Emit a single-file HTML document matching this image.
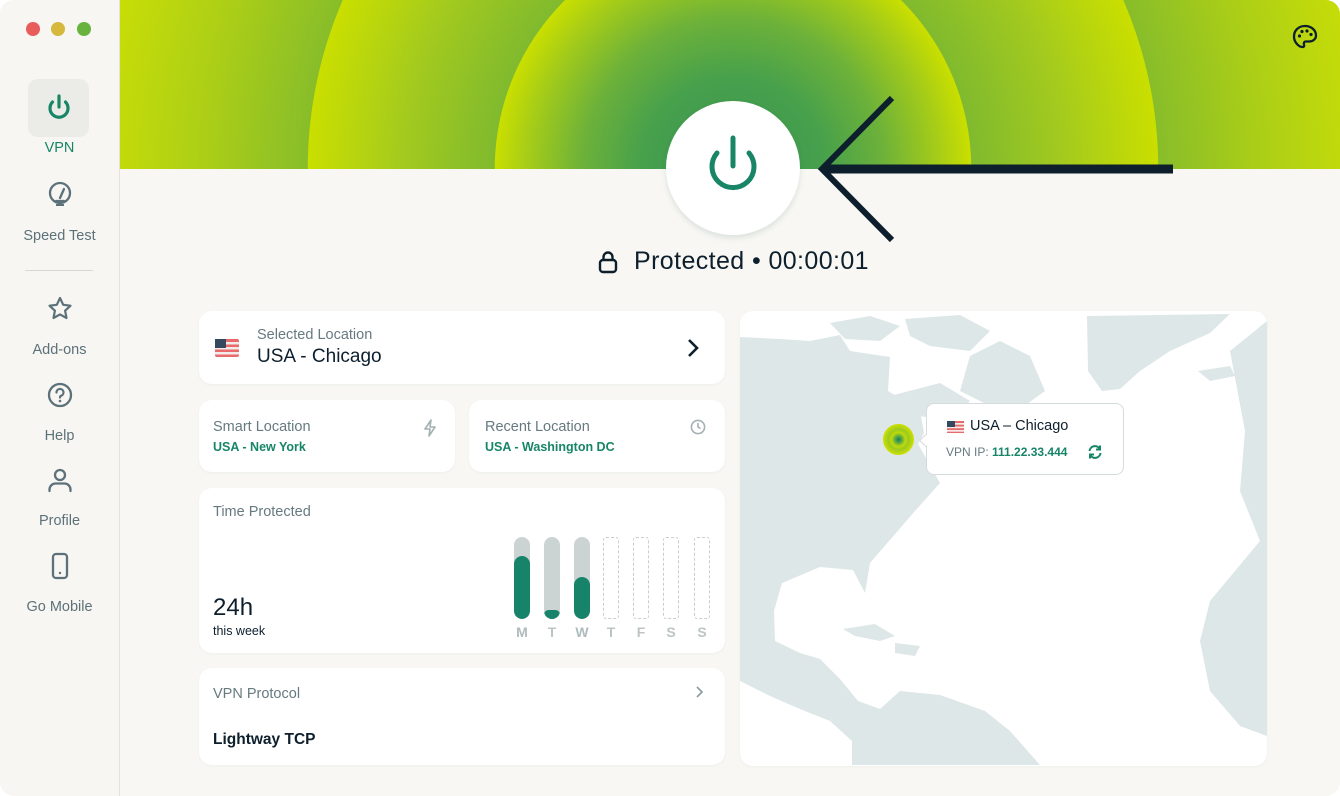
<!DOCTYPE html>
<html><head><meta charset="utf-8">
<style>
*{box-sizing:border-box;margin:0;padding:0}
body{width:1340px;height:796px;background:#fff;font-family:"Liberation Sans",sans-serif;overflow:hidden;position:relative}
.win{position:absolute;left:0;top:0;width:1340px;height:796px;border-radius:14px;overflow:hidden;background:#f8f7f3}
.side{position:absolute;left:0;top:0;width:120px;height:796px;background:#f7f6f2;border-right:1px solid #e4e3de}
.dot{position:absolute;top:22px;width:14px;height:14px;border-radius:50%}
.nav{position:absolute;left:0;width:119px;text-align:center;font-size:14.5px;color:#5c7179}
.nav svg{display:block;margin:0 auto 19px}
.hdr{position:absolute;left:120px;top:0;width:1220px;height:169px;
background:radial-gradient(circle at 613px 169px,#3a9550 0,#46a04c 90px,#6cb13a 150px,#a5cc18 205px,#cadf00 238px,#80ba2e 238.5px,#a3ca1e 330px,#cadf00 425px,#88bd2a 425.5px,#a9cd18 520px,#c9de06 640px)}
.card{position:absolute;background:#fff;border-radius:13px;box-shadow:0 1px 3px rgba(0,0,0,.04)}
.lbl{color:#667a80;font-size:14.5px}
.grn{color:#178566;font-weight:bold;font-size:12.5px}
.bar{position:absolute;top:537px;width:16px;height:82px;border-radius:8px;background:#cbd3d3;overflow:hidden}
.bar i{position:absolute;left:0;right:0;bottom:0;background:#17846a;border-radius:8px}
.dash{position:absolute;top:537px;width:16px;height:82px;border:1.5px dashed #c6cfcf;border-radius:3px}
.day{position:absolute;top:624px;width:20px;text-align:center;font-size:14px;font-weight:bold;color:#bcc5c5}
</style></head><body>
<div class="win">
<div class="side">
 <div class="dot" style="left:26px;background:#e85c5c"></div>
 <div class="dot" style="left:51px;background:#d6b83c"></div>
 <div class="dot" style="left:77px;background:#67b33e"></div>
 <div style="position:absolute;left:28px;top:79px;width:61px;height:58px;border-radius:10px;background:#ebece8"></div>
 <svg style="position:absolute;left:44px;top:93px" width="30" height="30" viewBox="0 0 30 30"><path d="M15 3v11" stroke="#178566" stroke-width="3.2" stroke-linecap="round"/><path d="M8.5 9a9 9 0 1 0 13 0" fill="none" stroke="#178566" stroke-width="3.2" stroke-linecap="round"/></svg>
 <div class="nav" style="top:140px;color:#178566">VPN</div>
 <div class="nav" style="top:179px"><svg width="26" height="30" viewBox="0 0 26 30"><circle cx="13" cy="14" r="10" fill="none" stroke="#5c7179" stroke-width="2.3"/><path d="M13 19l4-9M9 22h8" stroke="#5c7179" stroke-width="2.3" stroke-linecap="round"/><path d="M9 26h8" stroke="#5c7179" stroke-width="2"/></svg>Speed Test</div>
 <div style="position:absolute;left:25px;top:270px;width:68px;height:1px;background:#d6d9d6"></div>
 <div class="nav" style="top:295px"><svg width="28" height="28" viewBox="0 0 28 28"><path d="M14 3l3.2 6.8 7.3.9-5.4 5 1.4 7.3L14 19.4 7.5 23l1.4-7.3-5.4-5 7.3-.9z" fill="none" stroke="#5c7179" stroke-width="2.2" stroke-linejoin="round"/></svg>Add-ons</div>
 <div class="nav" style="top:381px"><svg width="28" height="28" viewBox="0 0 28 28"><circle cx="14" cy="14" r="11" fill="none" stroke="#5c7179" stroke-width="2.3"/><path d="M10.5 11.5a3.5 3.5 0 1 1 4.5 3.3c-.8.3-1 .9-1 1.7" fill="none" stroke="#5c7179" stroke-width="2.2" stroke-linecap="round"/><circle cx="14" cy="20" r="1.3" fill="#5c7179"/></svg>Help</div>
 <div class="nav" style="top:466px"><svg width="28" height="28" viewBox="0 0 28 28"><circle cx="14" cy="9" r="5" fill="none" stroke="#5c7179" stroke-width="2.3"/><path d="M3.5 25v-1.5a6 6 0 0 1 6-6h9a6 6 0 0 1 6 6V25" fill="none" stroke="#5c7179" stroke-width="2.3" stroke-linecap="round"/></svg>Profile</div>
 <div class="nav" style="top:552px"><svg width="28" height="28" viewBox="0 0 28 28"><rect x="7" y="2" width="14" height="24" rx="3" fill="none" stroke="#5c7179" stroke-width="2.3"/><circle cx="14" cy="21" r="1.2" fill="#5c7179"/></svg>Go Mobile</div>
</div>
<div class="hdr"></div>
<svg style="position:absolute;left:1291px;top:23px" width="28" height="28" viewBox="0 0 28 28"><path d="M14 3C7.5 3 3 7.5 3 13.5S8 24 11.5 24c1.6 0 2-1.3 1.5-2.6-.5-1.4.2-2.9 1.8-2.9h3.4C22 18.5 25 16 25 12.5 25 7 20 3 14 3z" fill="none" stroke="#0d1f2d" stroke-width="2.3" stroke-linejoin="round"/><circle cx="8.5" cy="13" r="1.6" fill="#0d1f2d"/><circle cx="11" cy="8.5" r="1.6" fill="#0d1f2d"/><circle cx="16" cy="8" r="1.6" fill="#0d1f2d"/><circle cx="20" cy="11.5" r="1.6" fill="#0d1f2d"/></svg>
<div style="position:absolute;left:666px;top:101px;width:134px;height:134px;border-radius:50%;background:#fff;box-shadow:0 3px 6px rgba(60,110,100,.15)"></div>
<svg style="position:absolute;left:700px;top:134px" width="66" height="70" viewBox="0 0 66 70"><path d="M33 4v28" stroke="#178566" stroke-width="5" stroke-linecap="round"/><path d="M17 19a21 21 0 1 0 32 0" fill="none" stroke="#178566" stroke-width="5" stroke-linecap="round"/></svg>
<svg style="position:absolute;left:0;top:0" width="1340" height="300"><path d="M892 98L822 169L892 240" fill="none" stroke="#0d1f2d" stroke-width="6"/><path d="M822 169H1173" stroke="#0d1f2d" stroke-width="9"/></svg>
<svg style="position:absolute;left:597px;top:250px" width="22" height="24" viewBox="0 0 22 24"><rect x="3" y="10" width="16" height="12" rx="3" fill="none" stroke="#0d1f2d" stroke-width="2.4"/><path d="M6.5 10V7a4.5 4.5 0 0 1 9 0v3" fill="none" stroke="#0d1f2d" stroke-width="2.4"/></svg>
<div style="position:absolute;left:634px;top:247px;font-size:25px;letter-spacing:0.4px;color:#0d1f2d">Protected • 00:00:01</div>

<div class="card" style="left:199px;top:311px;width:526px;height:73px">
 <svg style="position:absolute;left:16px;top:28px" width="24" height="18" viewBox="0 0 24 18"><rect width="24" height="18" rx="2" fill="#e86a6a"/><rect y="3" width="24" height="2.5" fill="#f3eaea"/><rect y="8" width="24" height="2.5" fill="#f3eaea"/><rect y="13" width="24" height="2.5" fill="#f3eaea"/><rect width="11" height="9" fill="#34495e"/></svg>
 <div class="lbl" style="position:absolute;left:58px;top:16px">Selected Location</div>
 <div style="position:absolute;left:58px;top:35px;font-size:19px;color:#0d1f2d">USA - Chicago</div>
 <svg style="position:absolute;left:488px;top:27px" width="12" height="20" viewBox="0 0 12 20"><path d="M2 2l8 8-8 8" fill="none" stroke="#0d1f2d" stroke-width="2.6"/></svg>
</div>
<div class="card" style="left:199px;top:400px;width:256px;height:72px">
 <div class="lbl" style="position:absolute;left:14px;top:19px">Smart Location</div>
 <div class="grn" style="position:absolute;left:14px;top:40px">USA - New York</div>
 <svg style="position:absolute;left:224px;top:19px" width="14" height="18" viewBox="0 0 14 18"><path d="M8 1L2 10h5l-1 7 6-9H7z" fill="none" stroke="#a3b1b2" stroke-width="1.6" stroke-linejoin="round"/></svg>
</div>
<div class="card" style="left:469px;top:400px;width:256px;height:72px">
 <div class="lbl" style="position:absolute;left:16px;top:19px">Recent Location</div>
 <div class="grn" style="position:absolute;left:16px;top:40px">USA - Washington DC</div>
 <svg style="position:absolute;left:221px;top:19px" width="16" height="16" viewBox="0 0 16 16"><circle cx="8" cy="8" r="6.6" fill="none" stroke="#a3b1b2" stroke-width="1.6"/><path d="M8 4v4l2.5 1.5" fill="none" stroke="#a3b1b2" stroke-width="1.6"/></svg>
</div>
<div class="card" style="left:199px;top:488px;width:526px;height:165px">
 <div class="lbl" style="position:absolute;left:14px;top:16px">Time Protected</div>
 <div style="position:absolute;left:14px;top:106px;font-size:24px;color:#0d1f2d">24h</div>
 <div style="position:absolute;left:14px;top:136px;font-size:12.5px;color:#0d1f2d">this week</div>
</div>
<div class="bar" style="left:514px"><i style="height:63px"></i></div>
<div class="bar" style="left:544px"><i style="height:9px"></i></div>
<div class="bar" style="left:574px"><i style="height:42px"></i></div>
<div class="dash" style="left:603px"></div>
<div class="dash" style="left:633px"></div>
<div class="dash" style="left:663px"></div>
<div class="dash" style="left:694px"></div>
<div class="day" style="left:512px;color:#b0bbbb">M</div><div class="day" style="left:542px">T</div><div class="day" style="left:572px;color:#b0bbbb">W</div><div class="day" style="left:601px">T</div><div class="day" style="left:631px">F</div><div class="day" style="left:661px">S</div><div class="day" style="left:692px">S</div>
<div class="card" style="left:199px;top:668px;width:526px;height:97px">
 <div class="lbl" style="position:absolute;left:14px;top:18px">VPN Protocol</div>
 <svg style="position:absolute;left:496px;top:17px" width="10" height="14" viewBox="0 0 10 14"><path d="M2 2l5 5-5 5" fill="none" stroke="#8a9a9d" stroke-width="1.6"/></svg>
 <div style="position:absolute;left:14px;top:63px;font-size:15.5px;font-weight:bold;color:#0d1f2d">Lightway TCP</div>
</div>
<div class="card" style="left:740px;top:311px;width:527px;height:455px;overflow:hidden">
 <svg width="527" height="455" viewBox="0 0 527 455">
  <g fill="#dde7e7">
   <path d="M0 26L40 28 70 30 100 24 110 40 150 46 148 80 180 99 184 122 178 133 200 172 175 200 130 252 125 282 113 259 80 256 42 272 34 300 35 330 60 342 80 348 100 368 118 390 140 398 160 380 200 384 245 400 270 420 300 454 112 454 112 430 90 410 60 398 30 385 0 370Z"/>
   <path d="M90 12L130 5 160 15 140 30 105 28Z"/>
   <path d="M165 8L220 4 250 20 230 40 190 35 170 25Z"/>
   <path d="M230 45L260 30 290 45 305 80 280 98 250 95 220 80Z"/>
   <path d="M150 85L200 72 230 90 210 110 180 105Z"/>
   <path d="M347 5L490 3 470 22 430 40 400 60 380 78 362 80 348 60Z"/>
   <path d="M458 60L490 55 495 65 470 70Z"/>
   <path d="M527 10L490 40 505 120 500 180 520 230 470 290 460 330 470 380 500 415 527 425Z"/>
   <path d="M103 318L135 313 155 325 140 330 115 325Z"/>
   <path d="M155 332L180 335 175 345 155 342Z"/>
  </g>
 </svg>
</div>
<div style="position:absolute;left:883px;top:424px;width:31px;height:31px;border-radius:50%;background:radial-gradient(circle,#1d7e55 0,#4ea54a 3px,#c0db0a 7px,#9cc920 10px,#cadf00 15px)"></div>
<div style="position:absolute;left:926px;top:403px;width:198px;height:72px;background:#fff;border:1px solid #d5dcdc;border-radius:8px"></div>
<div style="position:absolute;left:921px;top:436px;width:9px;height:9px;background:#fff;border-left:1px solid #d5dcdc;border-bottom:1px solid #d5dcdc;transform:rotate(45deg)"></div>
<svg style="position:absolute;left:947px;top:421px" width="17" height="12" viewBox="0 0 17 12"><rect width="17" height="12" fill="#e86a6a"/><rect y="2" width="17" height="1.7" fill="#f3eaea"/><rect y="5.5" width="17" height="1.7" fill="#f3eaea"/><rect y="9" width="17" height="1.7" fill="#f3eaea"/><rect width="8" height="6" fill="#34495e"/></svg>
<div style="position:absolute;left:970px;top:418px;font-size:14.5px;color:#0d1f2d">USA – Chicago</div>
<div style="position:absolute;left:946px;top:445px;font-size:12px;color:#667a80">VPN IP: <b style="color:#178566">111.22.33.444</b></div>
<svg style="position:absolute;left:1087px;top:444px" width="16" height="16" viewBox="0 0 16 16"><path d="M2.5 7a5.5 5.5 0 0 1 10-2.5M13.5 9a5.5 5.5 0 0 1-10 2.5" fill="none" stroke="#178566" stroke-width="2"/><path d="M13 1.5v4h-4M3 14.5v-4h4" fill="none" stroke="#178566" stroke-width="2"/></svg>
</div>
</body></html>
